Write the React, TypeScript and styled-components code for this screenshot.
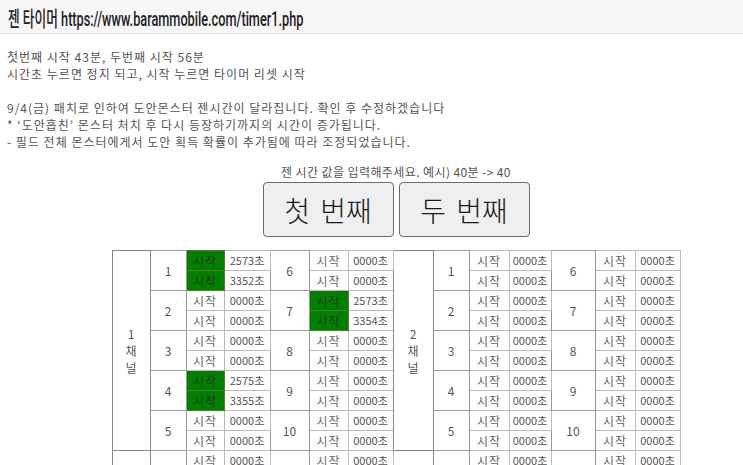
import React from "react";
import styled, { createGlobalStyle } from "styled-components";

const Global = createGlobalStyle`
    html, body {
        margin: 0;
        padding: 0;
        background: #fff;
        overflow: hidden;
    }
    body {
        font-family: "Noto Sans CJK KR", "Noto Sans", sans-serif;
        color: #444;
    }
`;

const Header = styled.div`
    height: 33px;
    background: #f7f7f7;
    border-bottom: 1px solid #e2e2e2;
    padding-left: 8px;
    display: flex;
    align-items: center;
`;

const Title = styled.h1`
    margin: 0;
    font-family: Roboto, "Noto Sans CJK KR", sans-serif;
    font-size: 21px;
    font-weight: 500;
    color: #222;
    white-space: nowrap;
    transform: scaleX(0.605);
    transform-origin: left center;
`;

const Notes = styled.div`
    padding: 14px 7px 0;
    font-size: 12px;
    line-height: 17px;
    color: #555;
    letter-spacing: 1px;
`;

const Line = styled.div`
    min-height: 17px;
    white-space: nowrap;
`;

const Center = styled.div`
    box-sizing: border-box;
    width: 100%;
    padding-left: 49px;
    margin-top: 13px;
    display: flex;
    flex-direction: column;
    align-items: center;
`;

const Hint = styled.div`
    font-size: 12px;
    line-height: 17px;
    color: #555;
    letter-spacing: 0.4px;
    white-space: nowrap;
`;

const Buttons = styled.div`
    display: flex;
    gap: 5px;
    margin-top: 2px;
`;

const BigButton = styled.button`
    width: 131px;
    height: 55px;
    background: #efefef;
    border: 1px solid #6b6b6b;
    border-radius: 4px;
    font-family: "Noto Sans CJK KR", sans-serif;
    font-size: 28px;
    font-weight: 300;
    color: #1a1a1a;
    padding: 0;
    word-spacing: 4px;
`;

const Table = styled.table`
    margin-top: 13px;
    border-collapse: collapse;
    table-layout: fixed;
    width: 568px;
    border-left: 1px solid #333;
    font-size: 11px;
    color: #555;
`;

const Cell = styled.td`
    height: 19px;
    padding: 0;
    text-align: center;
    vertical-align: middle;
    border: 1px solid #999;
    line-height: 17px;
    white-space: nowrap;
`;

const Channel = styled(Cell)`
    border-color: #888;
    font-size: 12px;
    line-height: 17px;
`;

const Num = styled(Cell)`
    font-size: 12px;
    border-color: #999;
`;

const Start = styled(Cell)<{ $on?: boolean }>`
    background: ${(p) => (p.$on ? "#007f00" : "#fff")};
    color: ${(p) => (p.$on ? "#1d3a1d" : "#666")};
    border-color: ${(p) => (p.$on ? "#5a7a2a" : "#bbb")};
    font-size: 12px;
    letter-spacing: 1px;
`;

const Time = styled(Cell)`
    border-color: #bbb;
    color: #555;
`;

const widths = [38, 36, 38, 46, 39, 39, 45, 40, 36, 40, 42, 44, 40, 45];

type Marks = Record<number, [number, number]>;

const marks: Record<number, Marks> = {
    1: { 1: [2573, 3352], 7: [2573, 3354], 4: [2575, 3355] },
};

function pad(v: number) {
    return String(v).padStart(4, "0");
}

function Entry({ ch, n, row }: { ch: number; n: number; row: number }) {
    const m = marks[ch]?.[n];
    return (
        <>
            {row === 0 && <Num rowSpan={2}>{n}</Num>}
            <Start $on={!!m}>시작</Start>
            <Time>{pad(m ? m[row] : 0)}초</Time>
        </>
    );
}

function Block({ left, right }: { left: number; right: number }) {
    const rows = [];
    for (let r = 0; r < 10; r++) {
        const g = Math.floor(r / 2);
        const sub = r % 2;
        rows.push(
            <tr key={r}>
                {r === 0 && (
                    <Channel rowSpan={10}>
                        {left}
                        <br />채<br />널
                    </Channel>
                )}
                <Entry ch={left} n={g + 1} row={sub} />
                <Entry ch={left} n={g + 6} row={sub} />
                {r === 0 && (
                    <Channel rowSpan={10}>
                        {right}
                        <br />채<br />널
                    </Channel>
                )}
                <Entry ch={right} n={g + 1} row={sub} />
                <Entry ch={right} n={g + 6} row={sub} />
            </tr>
        );
    }
    return <>{rows}</>;
}

export default function App() {
    return (
        <>
            <Global />
            <Header>
                <Title>젠 타이머 https://www.barammobile.com/timer1.php</Title>
            </Header>
            <Notes>
                <Line>첫번째 시작 43분, 두번째 시작 56분</Line>
                <Line>시간초 누르면 정지 되고, 시작 누르면 타이머 리셋 시작</Line>
                <Line />
                <Line>9/4(금) 패치로 인하여 도안몬스터 젠시간이 달라집니다. 확인 후 수정하겠습니다</Line>
                <Line>* ‘도안흡친’ 몬스터 처치 후 다시 등장하기까지의 시간이 증가됩니다.</Line>
                <Line>- 필드 전체 몬스터에게서 도안 획득 확률이 추가됨에 따라 조정되었습니다.</Line>
            </Notes>
            <Center>
                <Hint>젠 시간 값을 입력해주세요. 예시) 40분 -&gt; 40</Hint>
                <Buttons>
                    <BigButton>첫 번째</BigButton>
                    <BigButton>두 번째</BigButton>
                </Buttons>
                <Table>
                    <colgroup>
                        {widths.map((w, i) => (
                            <col key={i} style={{ width: w }} />
                        ))}
                    </colgroup>
                    <tbody>
                        <Block left={1} right={2} />
                        <Block left={3} right={4} />
                    </tbody>
                </Table>
            </Center>
        </>
    );
}
